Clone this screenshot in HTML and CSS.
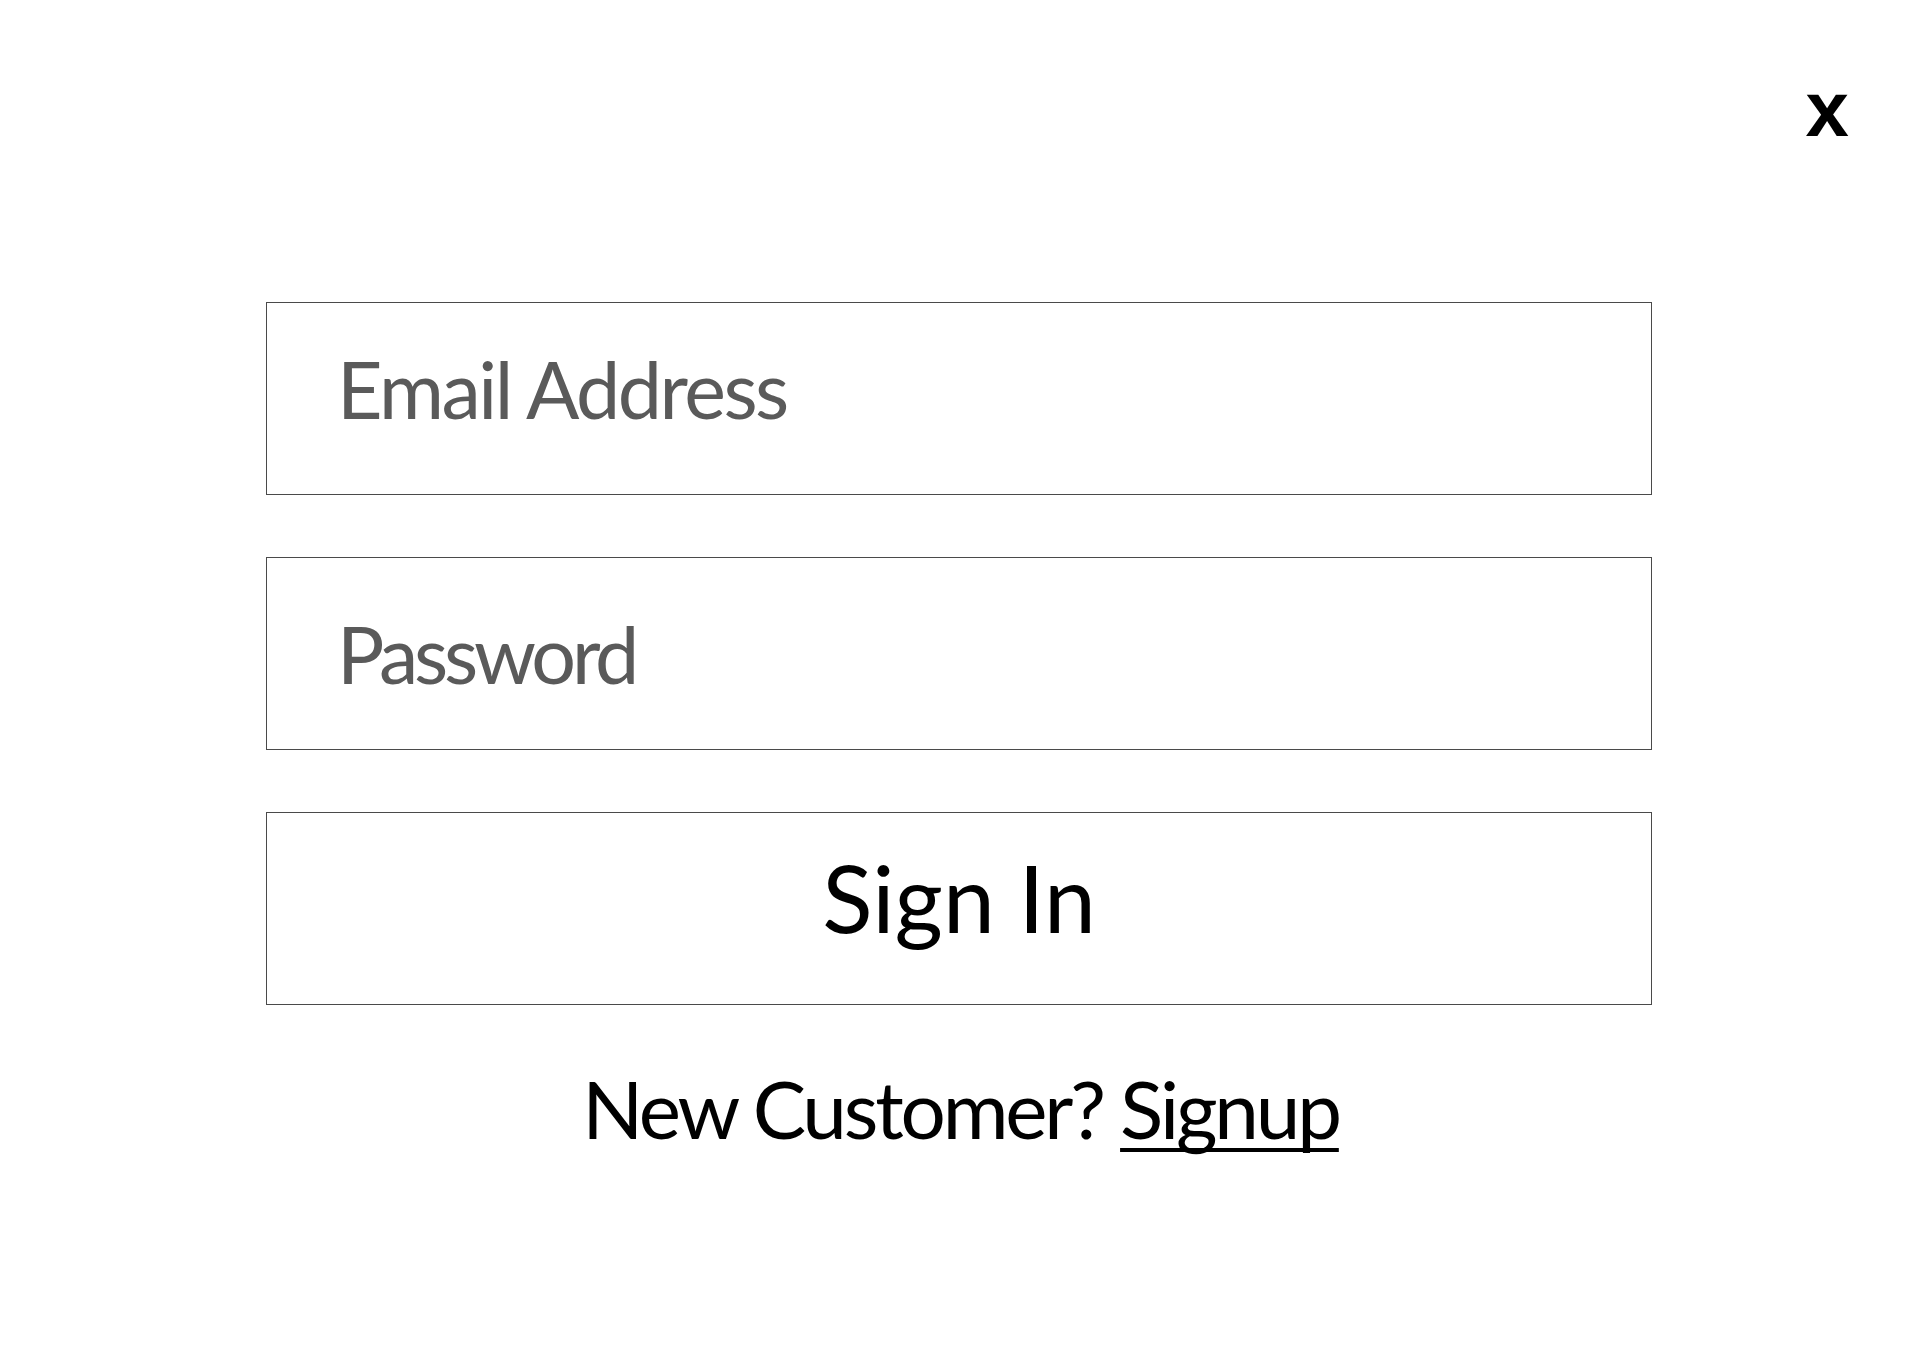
FILE: index.html
```html
<!DOCTYPE html>
<html lang="en">
<head>
<meta charset="utf-8">
<title>Sign In</title>
<link rel="stylesheet" href="styles.css">
</head>
<body>
<div class="modal">
  <div class="modal-top">
    <button class="close" type="button" aria-label="Close">x</button>
  </div>
  <form class="login-form">
    <input class="field field-email" type="email" placeholder="Email Address">
    <input class="field field-password" type="password" placeholder="Password">
    <button class="submit" type="button">Sign In</button>
  </form>
  <p class="signup">New Customer? <a href="#" class="signup-link">Signup</a></p>
</div>
</body>
</html>
```

FILE: styles.css
```css
html, body {
  margin: 0;
  padding: 0;
  background: #ffffff;
}

body {
  font-family: Lato, "Open Sans", sans-serif;
  color: #000;
}

.modal {
  width: 1921px;
  height: 1353px;
  box-sizing: border-box;
  display: flex;
  flex-direction: column;
}

.modal-top {
  display: flex;
  justify-content: flex-end;
  align-items: flex-start;
  padding: 70px 72px 0 0;
  height: 230px;
  box-sizing: border-box;
}

.close {
  background: none;
  border: 0;
  padding: 0;
  margin: 0;
  font-family: "Liberation Sans", Arial, sans-serif;
  font-weight: 700;
  font-size: 78px;
  line-height: 78px;
  height: 78px;
  color: #000;
  cursor: pointer;
}

.login-form {
  width: 1386px;
  margin: 72px 0 0 266px;
  display: flex;
  flex-direction: column;
  gap: 62px;
}

.field,
.submit {
  display: block;
  width: 100%;
  height: 193px;
  box-sizing: border-box;
  border: 1px solid #4a4a4a;
  background: #fff;
  margin: 0;
  border-radius: 0;
  font-family: Lato, "Open Sans", sans-serif;
}

.field {
  padding: 0 0 0 70px;
  font-size: 79px;
  color: #5a5a5a;
  outline: none;
}

.field-email {
  padding-bottom: 20px;
  letter-spacing: -2.5px;
}

.field-password {
  padding-bottom: 0;
  letter-spacing: -4.2px;
}

.field::placeholder {
  color: #5a5a5a;
  opacity: 1;
}

.submit {
  font-size: 93px;
  padding: 0 0 24px;
  color: #000;
  cursor: pointer;
}

.signup {
  margin: 63px 0 0;
  text-align: center;
  font-size: 80px;
  line-height: 1;
  letter-spacing: -3.2px;
  color: #000;
}

.signup-link {
  color: #000;
  text-decoration: underline;
  text-decoration-thickness: 4px;
  text-underline-offset: 9px;
  text-decoration-skip-ink: none;
}
```
